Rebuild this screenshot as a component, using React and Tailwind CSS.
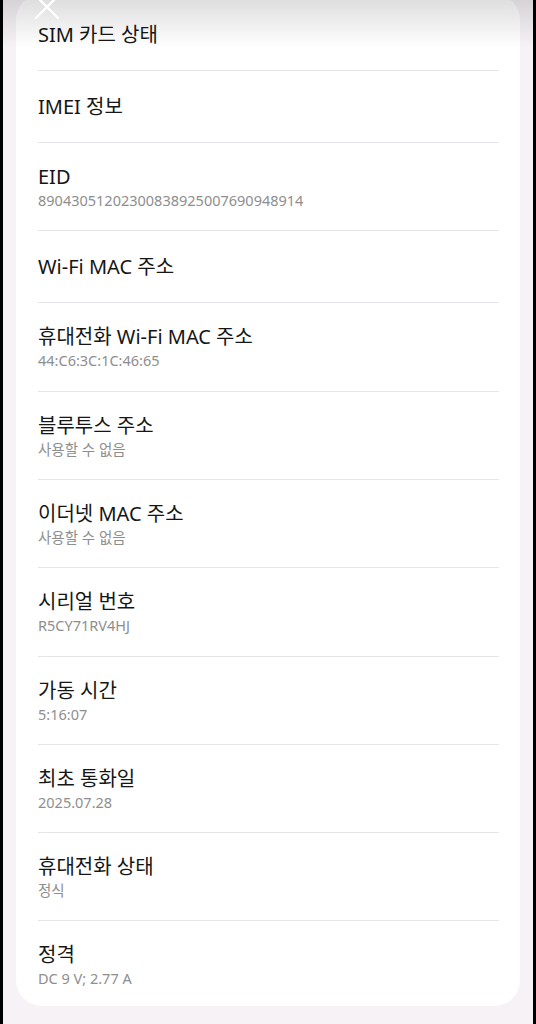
import React from "react";

const rows = [
  { t: "SIM 카드 상태", first: true },
  { t: "IMEI 정보" },
  { t: "EID", s: "89043051202300838925007690948914" },
  { t: "Wi-Fi MAC 주소" },
  { t: "휴대전화 Wi-Fi MAC 주소", s: "44:C6:3C:1C:46:65", tall: true },
  { t: "블루투스 주소", s: "사용할 수 없음" },
  { t: "이더넷 MAC 주소", s: "사용할 수 없음" },
  { t: "시리얼 번호", s: "R5CY71RV4HJ", tall: true },
  { t: "가동 시간", s: "5:16:07" },
  { t: "최초 통화일", s: "2025.07.28" },
  { t: "휴대전화 상태", s: "정식" },
  { t: "정격", s: "DC 9 V; 2.77 A", last: true },
];

function Row({ r }) {
  let pad;
  if (r.first) pad = "pt-[28px] pb-[22px]";
  else if (!r.s) pad = "pt-[23px] pb-[22px]";
  else if (r.last) pad = "pt-[21px] pb-[18px]";
  else if (r.tall) pad = "pt-[21px] pb-[21px]";
  else pad = "pt-[21px] pb-[20px]";
  return (
    <div className={`${pad} ${r.last ? "" : "border-b border-[#e7e4e9]"}`}>
      <div className="text-[20px] leading-[26px] text-[#161616]">{r.t}</div>
      {r.s && (
        <div className="text-[14.5px] leading-[20px] text-[#8e8e8e]">{r.s}</div>
      )}
    </div>
  );
}

export default function App() {
  return (
    <div
      className="relative min-h-screen bg-black px-[3px] overflow-hidden"
      style={{ fontFamily: '"Noto Sans", "Noto Sans CJK KR", sans-serif' }}
    >
      <div className="min-h-[1024px] bg-[#f6f2f6] px-[13px] pb-[18px]">
        <div className="-mt-[6px] rounded-[26px] bg-white px-[22px] pr-[21px]">
          {rows.map((r, i) => (
            <Row key={i} r={r} />
          ))}
        </div>
      </div>
      <div className="pointer-events-none absolute left-0 right-0 top-0 h-[48px] bg-gradient-to-b from-black/[0.13] to-transparent" />
      <svg
        className="pointer-events-none absolute left-[34px] top-[-6px]"
        width="26"
        height="26"
        viewBox="0 0 26 26"
      >
        <path d="M2 2 L24 24 M24 2 L2 24" stroke="white" strokeWidth="2.4" strokeLinecap="round" />
      </svg>
    </div>
  );
}
